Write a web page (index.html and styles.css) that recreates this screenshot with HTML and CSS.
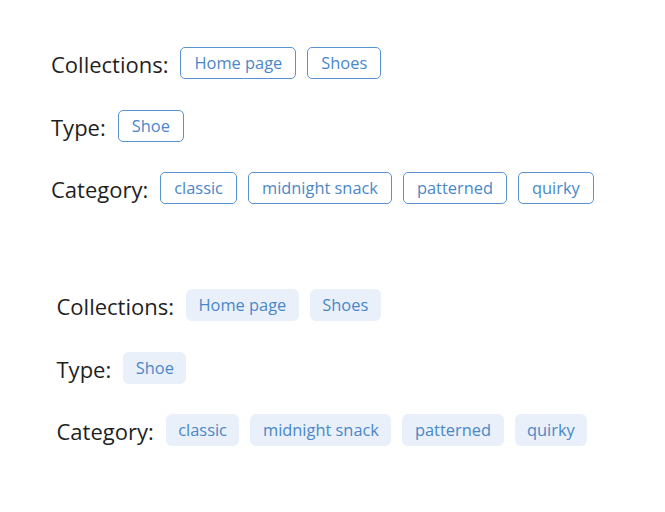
FILE: index.html
```html
<!DOCTYPE html>
<html>
<head>
<meta charset="utf-8">
<link rel="stylesheet" href="styles.css">
</head>
<body>
<section class="group group-outline">
  <div class="row">
    <span class="label">Collections:</span>
    <div class="tags">
      <span class="tag">Home page</span>
      <span class="tag">Shoes</span>
    </div>
  </div>
  <div class="row">
    <span class="label">Type:</span>
    <div class="tags">
      <span class="tag">Shoe</span>
    </div>
  </div>
  <div class="row">
    <span class="label">Category:</span>
    <div class="tags">
      <span class="tag">classic</span>
      <span class="tag">midnight snack</span>
      <span class="tag">patterned</span>
      <span class="tag">quirky</span>
    </div>
  </div>
</section>
<section class="group group-filled">
  <div class="row">
    <span class="label">Collections:</span>
    <div class="tags">
      <span class="tag">Home page</span>
      <span class="tag">Shoes</span>
    </div>
  </div>
  <div class="row">
    <span class="label">Type:</span>
    <div class="tags">
      <span class="tag">Shoe</span>
    </div>
  </div>
  <div class="row">
    <span class="label">Category:</span>
    <div class="tags">
      <span class="tag">classic</span>
      <span class="tag">midnight snack</span>
      <span class="tag">patterned</span>
      <span class="tag">quirky</span>
    </div>
  </div>
</section>
</body>
</html>
```
FILE: styles.css
```css
html, body {
  margin: 0;
  padding: 0;
  background: #ffffff;
}
body {
  font-family: "Open Sans", "Liberation Sans", sans-serif;
  color: #222222;
}
.group {
  display: flex;
  flex-direction: column;
  gap: 30.5px;
}
.group-outline {
  padding: 47px 0 0 51px;
}
.group-filled {
  padding: 85px 0 0 56.5px;
}
.row {
  display: flex;
  align-items: center;
  height: 32px;
  gap: 12px;
}
.label {
  font-size: 22px;
  line-height: 29px;
  padding-top: 3px;
  color: #1f1f1f;
  white-space: nowrap;
}
.tags {
  display: flex;
  gap: 11px;
}
.tag {
  box-sizing: border-box;
  height: 32px;
  display: flex;
  align-items: center;
  font-size: 16.4px;
  line-height: 22px;
  color: #4a87c9;
  white-space: nowrap;
}
.group-outline .tag {
  padding: 0 13px;
  border: 1.3px solid #5a93d5;
  border-radius: 5px;
}
.group-filled .tag {
  padding: 0 12.5px;
  background: #e9f0f9;
  border-radius: 6px;
}
```
